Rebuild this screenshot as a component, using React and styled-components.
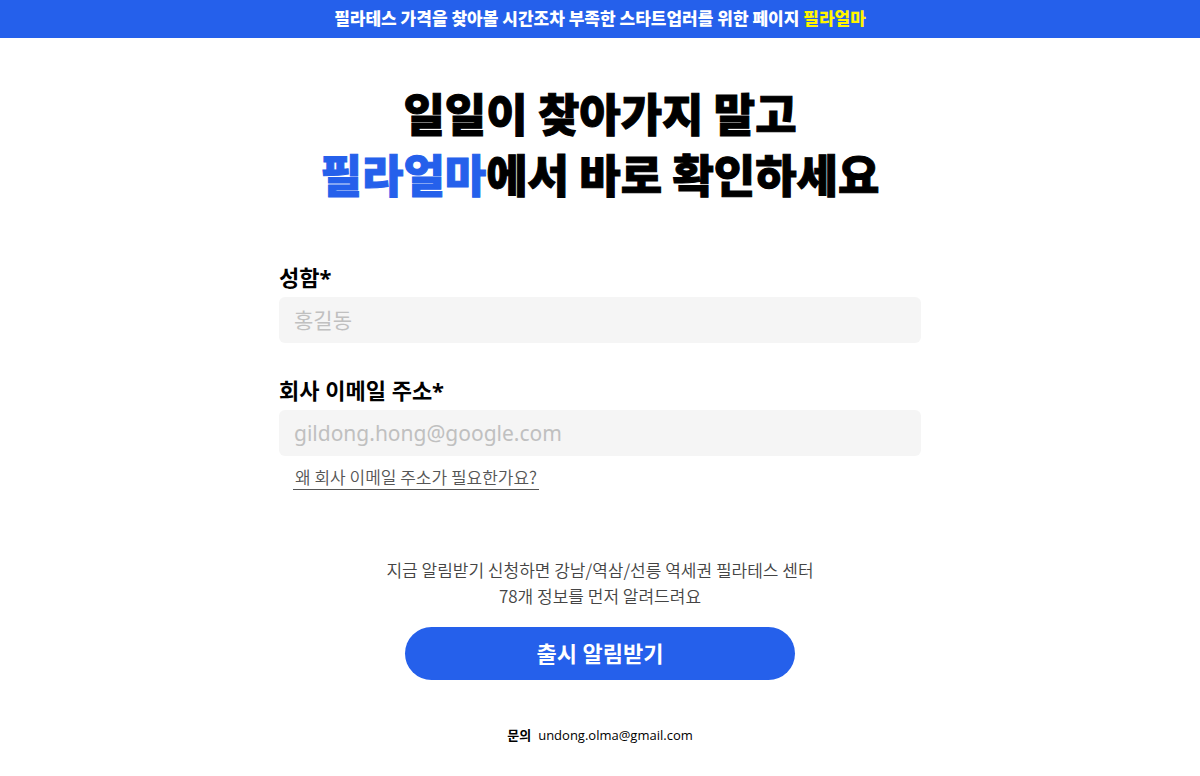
import React from 'react';
import styled, { createGlobalStyle } from 'styled-components';

const GlobalStyle = createGlobalStyle`
  * {
    box-sizing: border-box;
  }

  body {
    margin: 0;
    background: #fff;
    color: #000;
    font-family: 'Noto Sans', 'Noto Sans CJK KR', sans-serif;
  }
`;

const Banner = styled.header`
  padding: 7px 16px 9px;
  background: #2560eb;
  color: #fff;
  font-family: 'Noto Sans CJK KR', sans-serif;
  font-size: 17px;
  font-weight: 900;
  line-height: 22px;
  text-align: center;
`;

const Highlight = styled.span`
  color: ${(props) => props.color};
`;

const Main = styled.main`
  max-width: 642px;
  margin: 0 auto;
  padding-top: 44px;
`;

const Title = styled.h1`
  margin: 0 0 56px;
  font-family: 'Noto Sans CJK KR', sans-serif;
  font-size: 45px;
  font-weight: 900;
  line-height: 61px;
  text-align: center;
  word-break: keep-all;
  -webkit-text-stroke: 1px;
`;

const Field = styled.div`
  display: flex;
  flex-direction: column;
  margin-bottom: 30px;
`;

const Label = styled.label`
  margin-bottom: 3px;
  font-size: 22px;
  font-weight: 700;
  line-height: 34px;
`;

const Input = styled.input`
  width: 100%;
  height: 46px;
  padding: 0 15px;
  border: 0;
  border-radius: 6px;
  background: #f5f5f5;
  font-family: inherit;
  font-size: 21px;

  &::placeholder {
    color: #c0c0c0;
    opacity: 1;
  }
`;

const HelpLink = styled.a`
  align-self: flex-start;
  margin: 9px 0 0 14px;
  padding: 0 2px;
  border-bottom: 1px solid #555;
  color: #555;
  font-family: 'Noto Sans CJK KR', sans-serif;
  font-size: 17px;
  font-weight: 350;
  line-height: 24px;
  text-decoration: none;
`;

const Notice = styled.p`
  margin: 67px 0 18px;
  color: #444;
  font-family: 'Noto Sans CJK KR', sans-serif;
  font-size: 17px;
  font-weight: 350;
  line-height: 26px;
  text-align: center;
`;

const SubmitButton = styled.button`
  display: block;
  width: 390px;
  max-width: 100%;
  height: 53px;
  margin: 0 auto;
  padding: 0 0 4px;
  border: 0;
  border-radius: 27px;
  background: #2560eb;
  color: #fff;
  font-family: inherit;
  font-size: 22px;
  font-weight: 700;
`;

const Footer = styled.footer`
  display: flex;
  justify-content: center;
  gap: 7px;
  margin-top: 45px;
  font-family: 'Open Sans', 'Noto Sans CJK KR', sans-serif;
  font-size: 13px;
  line-height: 20px;
`;

function App() {
  return (
    <>
      <GlobalStyle />
      <Banner>
        필라테스 가격을 찾아볼 시간조차 부족한 스타트업러를 위한 페이지 <Highlight color="#fff500">필라얼마</Highlight>
      </Banner>
      <Main>
        <Title>
          일일이 찾아가지 말고
          <br />
          <Highlight color="#2560eb">필라얼마</Highlight>에서 바로 확인하세요
        </Title>
        <form>
          <Field>
            <Label htmlFor="name">성함*</Label>
            <Input id="name" type="text" placeholder="홍길동" />
          </Field>
          <Field>
            <Label htmlFor="email">회사 이메일 주소*</Label>
            <Input id="email" type="email" placeholder="gildong.hong@google.com" />
            <HelpLink href="#email">왜 회사 이메일 주소가 필요한가요?</HelpLink>
          </Field>
          <Notice>
            지금 알림받기 신청하면 강남/역삼/선릉 역세권 필라테스 센터
            <br />
            78개 정보를 먼저 알려드려요
          </Notice>
          <SubmitButton type="button">출시 알림받기</SubmitButton>
        </form>
      </Main>
      <Footer>
        <strong>문의</strong>
        <span>undong.olma@gmail.com</span>
      </Footer>
    </>
  );
}

export default App;
